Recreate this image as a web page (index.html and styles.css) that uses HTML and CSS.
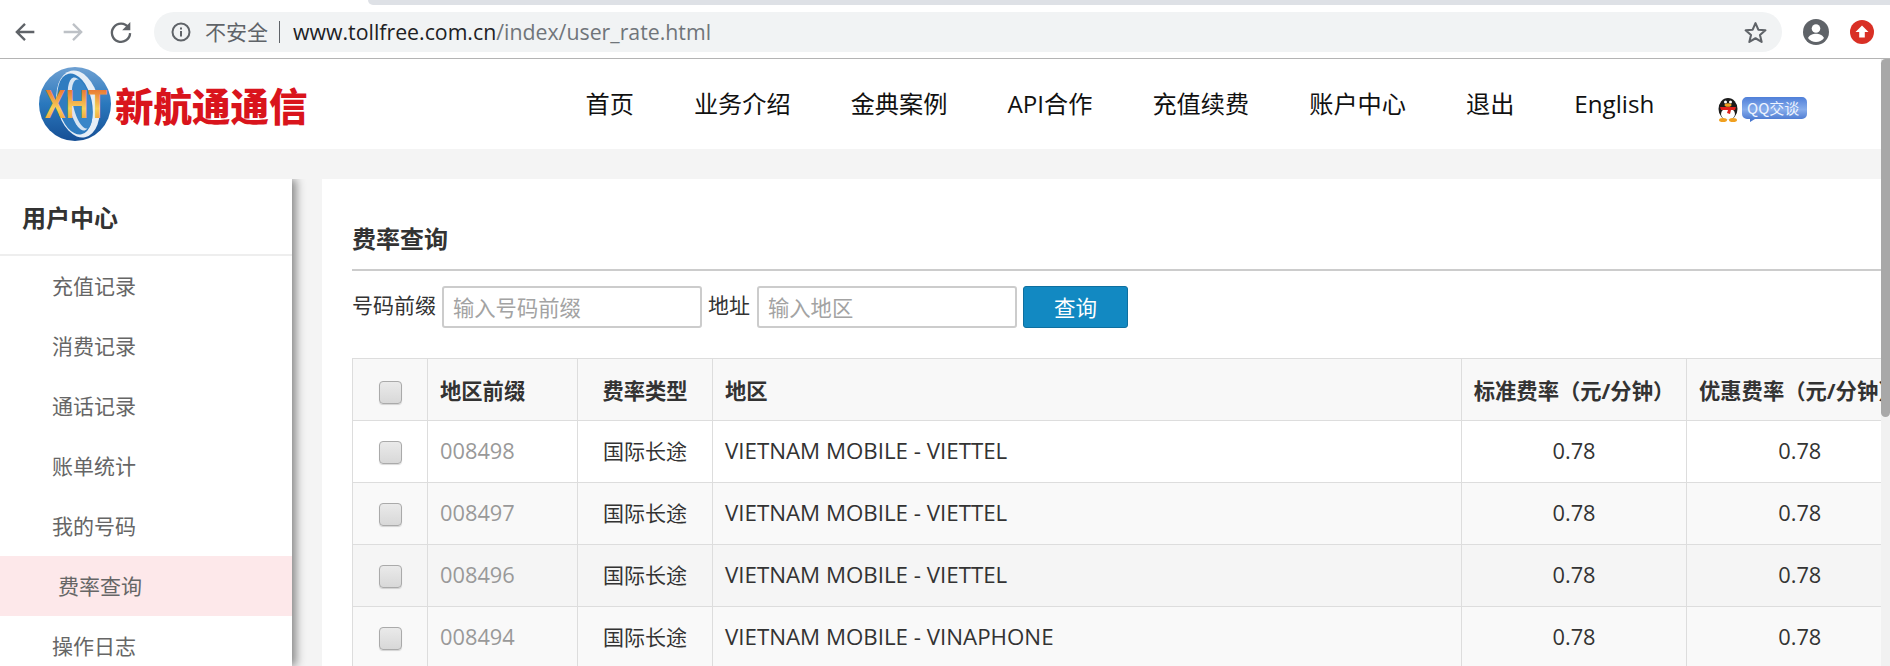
FILE: index.html
```html
<!DOCTYPE html>
<html lang="zh-CN">
<head>
<meta charset="utf-8">
<title>费率查询</title>
<link rel="stylesheet" href="styles.css">
</head>
<body>
<div class="browser">
  <div class="tabstrip"><div class="tabfill"></div></div>
  <div class="toolbar">
    <svg class="tool" viewBox="0 0 24 24"><path d="M20 12H5M12 5l-7 7 7 7" fill="none" stroke="#5f6368" stroke-width="2"/></svg>
    <svg class="tool" viewBox="0 0 24 24"><path d="M4 12h15M12 5l7 7-7 7" fill="none" stroke="#bdc1c6" stroke-width="2"/></svg>
    <svg class="tool" viewBox="0 0 24 24"><path d="M18.4 8.2A7.8 7.8 0 1 0 19.8 13" fill="none" stroke="#5f6368" stroke-width="2"/><path d="M20 3.5v7h-7z" fill="#5f6368"/></svg>
    <div class="omnibox">
      <svg class="info" viewBox="0 0 20 20"><circle cx="10" cy="10" r="8.500" fill="none" stroke="#5f6368" stroke-width="2"/><rect x="9" y="9" width="2" height="5.500" fill="#5f6368"/><rect x="9" y="5.500" width="2" height="2" fill="#5f6368"/></svg>
      <span class="insecure">不安全</span>
      <span class="sep"></span>
      <span class="url"><b>www.tollfree.com.cn</b>/index/user_rate.html</span>
      <svg class="star" viewBox="0 0 24 24"><path d="M12 3l2.700 6.300 6.800.6-5.200 4.500 1.600 6.600L12 17.500 6.100 21l1.600-6.600L2.500 9.900l6.800-.6z" fill="none" stroke="#5f6368" stroke-width="2" stroke-linejoin="round"/></svg>
    </div>
    <svg class="avatar" viewBox="0 0 26 26"><circle cx="13" cy="13" r="13" fill="#5f6368"/><circle cx="13" cy="9.500" r="4.300" fill="#fff"/><path d="M5 19c1.500-3.300 5-4.300 8-4.300s6.500 1 8 4.300a10 10 0 0 1-16 0z" fill="#fff"/></svg>
    <svg class="update" viewBox="0 0 24 24"><circle cx="12" cy="12" r="12" fill="#d93025"/><path d="M12 5.500l6.500 6.500h-3.700v5.500H9.200V12H5.500z" fill="#fff"/></svg>
  </div>
</div>
<div class="viewport">
  <div class="page">
    <header class="header">
      <a class="logo">
        <svg class="logo-mark" viewBox="0 0 74 76">
          <defs>
            <linearGradient id="globe" x1="0" y1="0" x2="0" y2="1"><stop offset="0" stop-color="#6ea0d2"/><stop offset=".5" stop-color="#2a78bd"/><stop offset="1" stop-color="#164f95"/></linearGradient>
            <linearGradient id="letters" x1="0" y1="0" x2="0" y2="1"><stop offset="0" stop-color="#e2501f"/><stop offset=".6" stop-color="#f8cf5a"/><stop offset="1" stop-color="#ef8a2a"/></linearGradient>
          </defs>
          <ellipse cx="37" cy="38" rx="36" ry="37" fill="url(#globe)"/>
          <ellipse cx="40" cy="38" rx="21" ry="34" fill="#e6eef7" transform="rotate(-12 40 38)"/>
          <ellipse cx="37" cy="38" rx="17" ry="31" fill="#2f7cc0" transform="rotate(-12 37 38)"/>
          <ellipse cx="41" cy="38" rx="10" ry="27" fill="#d8e5f2" transform="rotate(-12 41 38)"/>
          <ellipse cx="44" cy="38" rx="9" ry="25" fill="#3a86c8" transform="rotate(-12 44 38)"/>
          <text class="logo-xht" fill="url(#letters)" transform="translate(38 52) scale(.76 1)">XHT</text>
        </svg>
        <span class="logo-text">新航通通信</span>
      </a>
      <nav class="nav">
        <a>首页</a><a>业务介绍</a><a>金典案例</a><a>API合作</a><a>充值续费</a><a>账户中心</a><a>退出</a><a>English</a>
      </nav>
      <svg class="qq" viewBox="0 0 90 26">
        <defs>
          <linearGradient id="bubble" x1="0" y1="0" x2="0" y2="1"><stop offset="0" stop-color="#4f7fd8"/><stop offset=".5" stop-color="#86aceb"/><stop offset="1" stop-color="#3f6fcb"/></linearGradient>
        </defs>
        <ellipse cx="11" cy="13" rx="9.500" ry="11" fill="#1c1c1c"/>
        <ellipse cx="11" cy="18" rx="7" ry="6" fill="#fff"/>
        <circle cx="8.500" cy="6" r="1.500" fill="#fff"/>
        <circle cx="13.500" cy="6" r="1.500" fill="#fff"/>
        <ellipse cx="11" cy="9" rx="3.500" ry="1.800" fill="#f0a020"/>
        <path d="M3 11h16l-1 3h-4l-1 4-3-1 1-3H4z" fill="#e0201c"/>
        <ellipse cx="6" cy="24" rx="4" ry="2" fill="#f0a020"/>
        <ellipse cx="16" cy="24" rx="4" ry="2" fill="#f0a020"/>
        <path d="M30 1h55a5 5 0 0 1 5 5v12a5 5 0 0 1-5 5H38l-5 3 0-3h-3a5 5 0 0 1-5-5V6a5 5 0 0 1 5-5z" fill="url(#bubble)"/>
        <text x="30" y="17.500" class="qq-text" fill="#eef4ff">QQ交谈</text>
      </svg>
    </header>
    <div class="body">
      <aside class="side">
        <h3 class="side-title">用户中心</h3>
        <ul class="side-list">
          <li>充值记录</li>
          <li>消费记录</li>
          <li>通话记录</li>
          <li>账单统计</li>
          <li>我的号码</li>
          <li class="active">费率查询</li>
          <li>操作日志</li>
        </ul>
      </aside>
      <main class="main">
        <h2 class="main-title">费率查询</h2>
        <form class="search">
          <label>号码前缀</label>
          <input class="field" placeholder="输入号码前缀">
          <label>地址</label>
          <input class="field" placeholder="输入地区">
          <button class="btn" type="button">查询</button>
        </form>
        <table class="rates">
          <colgroup><col class="c1"><col class="c2"><col class="c3"><col class="c4"><col class="c5"><col class="c6"></colgroup>
          <thead>
            <tr><th><span class="check"></span></th><th class="left">地区前缀</th><th>费率类型</th><th class="left">地区</th><th>标准费率（元/分钟）</th><th class="clip">优惠费率（元/分钟）</th></tr>
          </thead>
          <tbody>
            <tr><td><span class="check"></span></td><td class="left prefix">008498</td><td>国际长途</td><td class="left region">VIETNAM MOBILE - VIETTEL</td><td class="num">0.78</td><td class="num">0.78</td></tr>
            <tr><td><span class="check"></span></td><td class="left prefix">008497</td><td>国际长途</td><td class="left region">VIETNAM MOBILE - VIETTEL</td><td class="num">0.78</td><td class="num">0.78</td></tr>
            <tr><td><span class="check"></span></td><td class="left prefix">008496</td><td>国际长途</td><td class="left region">VIETNAM MOBILE - VIETTEL</td><td class="num">0.78</td><td class="num">0.78</td></tr>
            <tr><td><span class="check"></span></td><td class="left prefix">008494</td><td>国际长途</td><td class="left region">VIETNAM MOBILE - VINAPHONE</td><td class="num">0.78</td><td class="num">0.78</td></tr>
          </tbody>
        </table>
      </main>
    </div>
  </div>
  <div class="scrollbar"><div class="thumb"></div></div>
</div>
</body>
</html>
```

FILE: styles.css
```css
* { box-sizing: border-box; }
html, body { margin: 0; height: 666px; overflow: hidden; }
body {
  display: flex;
  flex-direction: column;
  font-family: "Open Sans", "Noto Sans CJK SC", sans-serif;
  font-size: 21px;
  color: #333;
  background: #fff;
}
.browser { flex: none; height: 59px; border-bottom: 1px solid #b4b4b4; background: #fff; }
.tabstrip { height: 5px; padding-left: 368px; }
.tabfill { height: 5px; background: #dee1e6; border-bottom-left-radius: 5px; }
.toolbar { display: flex; align-items: center; height: 53px; padding: 0 0 0 11px; }
.tool { width: 28px; height: 28px; margin-right: 20px; flex: none; }
.tool:nth-child(3) { margin-right: 19px; }
.omnibox {
  flex: none; display: flex; align-items: center;
  width: 1628px; height: 40px; margin-top: 1px; padding: 0 0 2px 17px;
  background: #f1f3f4; border-radius: 20px;
}
.info { width: 20px; height: 20px; margin-right: 14px; margin-top: 2px; flex: none; }
.insecure { color: #5f6368; font-size: 21px; }
.sep { width: 1px; height: 22px; margin: 2px 13px 0 11px; background: #5f6368; }
.url { color: #70757a; font-size: 21.300px; white-space: nowrap; }
.url b { color: #202124; font-weight: 400; }
.star { width: 25px; height: 25px; margin: 2px 14px 0 auto; flex: none; }
.avatar { width: 26px; height: 26px; margin-left: 21px; flex: none; }
.update { width: 24px; height: 24px; margin-left: 21px; flex: none; }

.viewport { flex: 1; display: flex; min-height: 0; }
.page { flex: 1; min-width: 0; background: #f4f4f4; overflow: hidden; }
.scrollbar { flex: none; width: 9px; background: #f1f1f1; }
.thumb { height: 358px; background: #a8a8a8; border-radius: 5px 0 5px 5px; }

.header { display: flex; align-items: center; height: 90px; background: #fff; padding-left: 38px; }
.logo { display: flex; align-items: center; flex: none; }
.logo-mark { width: 74px; height: 76px; display: block; }
.logo-xht { font-family: "Liberation Sans", sans-serif; font-weight: 700; font-size: 41px; text-anchor: middle; }
.logo-text {
  margin-left: 3px; color: #d9141c; font-size: 38.500px; font-weight: 900; line-height: 1;
  font-family: "Noto Sans CJK SC", sans-serif;
}
.nav {
  display: flex; align-items: baseline; gap: 60px; margin-left: 278px; margin-top: 0;
  font-size: 24.200px; line-height: 34px; color: #111; white-space: nowrap;
}
.qq { width: 90px; height: 26px; margin-left: 63px; margin-top: 10px; flex: none; }
.qq-text { font-size: 15px; font-family: "Noto Sans CJK SC", sans-serif; }

.body { display: flex; margin-top: 30px; height: 487px; }
.side { flex: none; width: 292px; background: #fff; box-shadow: 4px 0 9px rgba(0,0,0,.45); clip-path: inset(0 -20px 0 0); }
.side-title {
  margin: 0; height: 77px; line-height: 77px; padding-left: 22px;
  font-size: 24px; font-weight: 700; color: #333; border-bottom: 2px solid #eee;
}
.side-list { list-style: none; margin: 0; padding: 0; }
.side-list li { height: 60px; line-height: 60px; padding-left: 52px; font-size: 21px; color: #666; }
.side-list li.active { background: #fde8ea; padding-left: 58px; }

.main { flex: 1; min-width: 0; margin-left: 30px; padding-left: 30px; background: #fff; overflow: hidden; }
.main-title {
  margin: 0; height: 92px; padding-top: 34px; line-height: 52px;
  font-size: 24px; font-weight: 700; color: #333; border-bottom: 2px solid #ccc;
}
.search { display: flex; align-items: flex-start; height: 87px; padding-top: 15px; font-size: 21px; color: #333; }
.search label { line-height: 38px; }
.field {
  width: 260px; height: 42px; margin: 0 6px; padding: 0 9px;
  border: 2px solid #ccc; border-radius: 3px; background: #fff;
  font: inherit; font-size: 21.300px; outline: none;
}
.field + label + .field { margin-left: 7px; }
.field::placeholder { color: #a3a3a3; opacity: 1; }
.btn {
  width: 105px; height: 42px; padding: 0 0 2px; border: 1px solid #0e6f9f; border-radius: 3px;
  background: #1289c2; color: #fff; font: inherit; font-size: 21.500px;
}

.rates { table-layout: fixed; width: 1560px; border-collapse: collapse; font-size: 21px; color: #333; }
.c1 { width: 75px; } .c2 { width: 150px; } .c3 { width: 135px; } .c4 { width: 749px; }
.c5 { width: 225px; } .c6 { width: 226px; }
.rates th, .rates td {
  height: 62px; border: 1px solid #ddd; text-align: center; white-space: nowrap; overflow: visible;
}
.rates th { padding: 0; background: #f8f8f8; font-weight: 700; font-size: 21.300px; color: #333; }
.rates td { padding: 0 0 3px; }
.rates th:last-child, .rates td:last-child { border-right: 0; }
.rates .left { text-align: left; padding-left: 12px; }
.rates .clip { text-align: left; padding-left: 12px; }
.rates .prefix { color: #999; font-size: 21.800px; }
.rates .region { font-size: 22.300px; }
.rates .num { font-size: 21.800px; }
tbody tr:nth-child(even) td { background: #f9f9f9; }
tbody tr:nth-child(3) td { background: #f5f5f5; }
.check {
  display: inline-block; width: 23px; height: 23px; vertical-align: middle;
  border: 1px solid #aaa; border-radius: 4px;
  background: linear-gradient(#eaeaea, #d8d8d8);
  box-shadow: 0 1px 1px rgba(0,0,0,.15);
}
```
